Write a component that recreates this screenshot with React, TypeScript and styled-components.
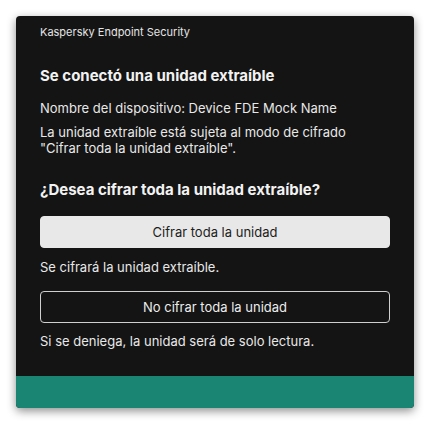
import { createGlobalStyle } from "styled-components";
import styled from "styled-components";

const GlobalStyle = createGlobalStyle`
  html, body {
    margin: 0;
    padding: 0;
    background: #ffffff;
  }
  body {
    font-family: Inter, "Noto Sans", "Liberation Sans", sans-serif;
  }
`;

interface ChoiceProps {
	$primary?: boolean;
}

const App = () => {
	return (
		<>
			<GlobalStyle />
			<Card>
				<Header>Kaspersky Endpoint Security</Header>
				<Content>
					<Title>Se conectó una unidad extraíble</Title>
					<Text $gap={14}>Nombre del dispositivo: Device FDE Mock Name</Text>
					<Text $gap={8}>
						La unidad extraíble está sujeta al modo de cifrado
						<br />
						"Cifrar toda la unidad extraíble".
					</Text>
					<Question>¿Desea cifrar toda la unidad extraíble?</Question>
					<Choice $primary>Cifrar toda la unidad</Choice>
					<Text $gap={11}>Se cifrará la unidad extraíble.</Text>
					<Choice>No cifrar toda la unidad</Choice>
					<Text $gap={10}>Si se deniega, la unidad será de solo lectura.</Text>
				</Content>
				<Footer />
			</Card>
		</>
	);
};

const Card = styled.div`
  margin: 16px;
  width: 398px;
  height: 392px;
  box-sizing: border-box;
  background: #141414;
  border-radius: 4px;
  box-shadow: 0 3px 10px rgba(0, 0, 0, 0.45);
  display: flex;
  flex-direction: column;
  overflow: hidden;
  color: #ececec;
`;

const Header = styled.div`
  height: 32px;
  line-height: 32px;
  padding: 0 24px;
  font-size: 11px;
  color: #e4e4e4;
`;

const Content = styled.div`
  flex: 1;
  padding: 18px 24px 0;
  display: flex;
  flex-direction: column;
`;

const Title = styled.div`
  font-size: 15px;
  line-height: 20px;
  font-weight: 700;
  color: #f2f2f2;
`;

const Text = styled.div<{ $gap: number }>`
  margin-top: ${(p) => p.$gap}px;
  font-size: 13px;
  line-height: 16px;
  color: #e8e8e8;
`;

const Question = styled.div`
  margin-top: 24px;
  font-size: 15px;
  line-height: 20px;
  font-weight: 700;
  color: #f2f2f2;
`;

const Choice = styled.button<ChoiceProps>`
  margin-top: 16px;
  height: 32px;
  width: 100%;
  box-sizing: border-box;
  border-radius: 4px;
  font-family: inherit;
  font-size: 13px;
  cursor: pointer;
  border: 1px solid ${(p) => (p.$primary ? "#e8e8e8" : "#cfcfcf")};
  background: ${(p) => (p.$primary ? "#e8e8e8" : "transparent")};
  color: ${(p) => (p.$primary ? "#1d1d1b" : "#ececec")};
`;

const Footer = styled.div`
  height: 32px;
  background: #1b8574;
`;

export default App;
